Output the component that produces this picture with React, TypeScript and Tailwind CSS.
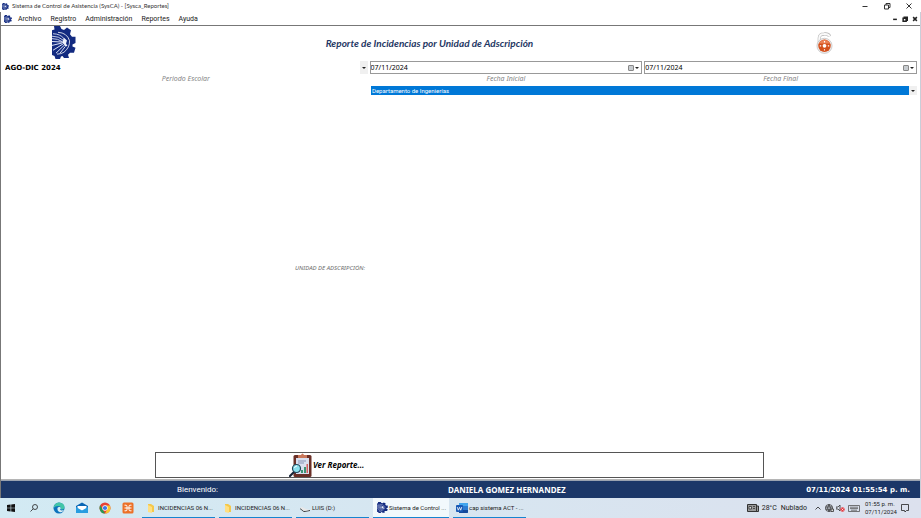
import type { ReactNode } from 'react';

function GearLogo({ className }: { className?: string }) {
  return (
    <svg viewBox="0 0 24 34" preserveAspectRatio="none" className={className} aria-hidden="true">
      <path d="M2 0H8L9.500 3L12 4L15 1.500L19 4.500L18 8.500L20 11H23.500V17.500L20.500 19L20.500 21L23.500 22.500L22 27.500L18 27.500L16 29.500L17 33H12L10.500 31L9 31.500L8 34H3.500L2.500 31L0 30V4.500L2.500 3.500Z" fill="#122a80" />
      <path d="M6 6.500Q15 7 17.500 15Q18 22 12 27Q9 29 5 29" fill="none" stroke="#fff" strokeWidth=".8" />
      <path d="M1 8Q8 8 12 13M0 10.500Q7 10.500 11 14.500M0 13Q6 13 10 16" fill="none" stroke="#c5cdea" strokeWidth="1" />
      <path d="M12 12L15 15L14 18L15.500 20.500L13 21L12 19L10 17Z" fill="#eef1fb" />
      <path d="M0 16L10 16.500M0 20L10 17.500M1 25L11 18.500M4 28L12 20M8 28L13 21.500" fill="none" stroke="#dfe5f5" strokeWidth="1" />
    </svg>
  );
}

function LockIcon() {
  return (
    <svg viewBox="0 0 18 23" className="h-[22px] w-[17px]" aria-hidden="true">
      <path d="M3.500 11V6.500Q3.500 2 8.500 2Q13 1.500 14.500 4.500" fill="none" stroke="#b4b4b4" strokeWidth="3.400" />
      <path d="M3.500 11V6.500Q3.500 2 8.500 2Q13 1.500 14.500 4.500" fill="none" stroke="#fafafa" strokeWidth="2.200" />
      <circle cx="9" cy="14.500" r="8" fill="#f1eeee" stroke="#bbb" strokeWidth=".7" />
      <circle cx="9" cy="14.500" r="6.600" fill="#d4501c" />
      <path d="M3 12Q9 4 15 12Z" fill="#eb8156" />
      <circle cx="9" cy="14.500" r="2" fill="#fff" />
      <path d="M9 9.500V11M9 18V19.500M4 14.500H5.500M12.500 14.500H14" stroke="#fff" strokeWidth="1.200" />
    </svg>
  );
}

function ReportIcon() {
  return (
    <svg viewBox="0 0 24 24" className="h-6 w-6" aria-hidden="true">
      <rect x="4.500" y="2" width="18" height="22" rx="1.500" fill="#6b3028" />
      <path d="M7 5H20V21H7Z" fill="#d9e0f0" />
      <path d="M9 5V2H12Q13.500 -1 15 2H18V5Z" fill="#c9775a" />
      <path d="M9 8H17M9 10H15" stroke="#8793b5" strokeWidth="1" />
      <path d="M12 20V17H14V20ZM15 20V14H17V20Z" fill="#3c9674" />
      <path d="M17.500 20V11H19V20Z" fill="#d25e5e" />
      <path d="M5 19L1 23" stroke="#182437" strokeWidth="2.200" strokeLinecap="round" />
      <circle cx="7.500" cy="15.500" r="4" fill="#8be0ee" stroke="#234458" strokeWidth="1.200" />
      <path d="M5.500 15Q6 13 8 13" stroke="#fff" fill="none" />
    </svg>
  );
}

function Caret() {
  return (
    <svg viewBox="0 0 4 2" className="h-[2px] w-1" aria-hidden="true">
      <path d="M0 0H4L2 2Z" fill="#222" />
    </svg>
  );
}

function MinimizeIcon({ className }: { className: string }) {
  return (
    <svg viewBox="0 0 8 8" className={className} fill="none" stroke="currentColor" aria-hidden="true">
      <path d="M1.500 4.500H6.500" />
    </svg>
  );
}

function RestoreIcon({ className }: { className: string }) {
  return (
    <svg viewBox="0 0 8 8" className={className} fill="none" stroke="currentColor" aria-hidden="true">
      <path d="M1.500 3H5.500V7H1.500ZM3 3V1.500H7V5.500H5.500" />
    </svg>
  );
}

function CloseIcon({ className }: { className: string }) {
  return (
    <svg viewBox="0 0 8 8" className={className} fill="none" stroke="currentColor" aria-hidden="true">
      <path d="M1.500 1.500L6.500 6.500M6.500 1.500L1.500 6.500" />
    </svg>
  );
}

function TitleBar() {
  return (
    <header className="flex h-3 items-center pr-2 pl-[2px] text-[#333]">
      <GearLogo className="h-[7px] w-[7px]" />
      <h1 className="ml-[3px] flex-1 font-['Lato',sans-serif] text-[6px] leading-3">Sistema de Control de Asistencia (SysCA) - [Sysca_Reportes]</h1>
      <div className="flex gap-[14px]">
        <button aria-label="Minimizar"><MinimizeIcon className="h-2 w-2" /></button>
        <button aria-label="Restaurar"><RestoreIcon className="h-2 w-2" /></button>
        <button aria-label="Cerrar"><CloseIcon className="h-2 w-2" /></button>
      </div>
    </header>
  );
}

function MenuBar() {
  return (
    <nav className="flex h-[14px] items-center border-b border-[#777] pr-[2px] pl-[3px]">
      <GearLogo className="h-2 w-2" />
      <div className="ml-[6px] flex flex-1 gap-[9px] font-['Roboto',sans-serif] text-[7px] leading-3">
        {['Archivo', 'Registro', 'Administración', 'Reportes', 'Ayuda'].map((name) => (
          <button key={name}>{name}</button>
        ))}
      </div>
      <div className="flex gap-1">
        <button aria-label="Minimizar reporte"><MinimizeIcon className="h-[6px] w-[6px] stroke-2" /></button>
        <button aria-label="Restaurar reporte"><RestoreIcon className="h-[6px] w-[6px] stroke-2" /></button>
        <button aria-label="Cerrar reporte"><CloseIcon className="h-[6px] w-[6px] stroke-2" /></button>
      </div>
    </nav>
  );
}

function FieldLabel({ id, children }: { id: string; children: ReactNode }) {
  return (
    <label htmlFor={id} className="block pb-[2px] text-center text-[7px] leading-[9px] italic text-[#858585]">
      {children}
    </label>
  );
}

function DateField({ id, label }: { id: string; label: string }) {
  return (
    <div>
      <div className="flex h-[13px] items-center border border-[#999] pr-[2px]">
        <input id={id} defaultValue="07/11/2024" className="min-w-0 flex-1 text-[7px] leading-[11px] text-black outline-none" />
        <button aria-label={'Abrir calendario: ' + label} className="flex items-center gap-[1px]">
          <svg viewBox="0 0 6 6" className="h-[6px] w-[6px]" aria-hidden="true">
            <rect x=".5" y=".5" width="5" height="5" rx=".5" fill="#c8ccd0" stroke="#888" />
          </svg>
          <Caret />
        </button>
      </div>
      <FieldLabel id={id}>{label}</FieldLabel>
    </div>
  );
}

function ArrowBox() {
  return (
    <span className="pointer-events-none absolute inset-y-0 right-0 flex w-2 items-center justify-center bg-[#f0f0f0]">
      <Caret />
    </span>
  );
}

function ReportForm() {
  return (
    <main className="flex flex-1 flex-col border-b border-[#b5b5b5] pr-[3px] pl-[3px]">
      <div className="grid h-[35px] grid-cols-[120px_1fr_186px] items-center pb-[2px]">
        <GearLogo className="h-[33px] w-6 justify-self-center" />
        <h2 className="pr-1 pl-2 text-center font-['Lato',sans-serif] text-[10px] leading-3 font-bold italic text-[#1f3864]">
          Reporte de Incidencias por Unidad de Adscripción
        </h2>
        <div className="justify-self-center"><LockIcon /></div>
      </div>

      <div className="grid grid-cols-[4fr_3fr_3fr] gap-x-[2px]">
        <div>
          <div className="relative h-[13px]">
            <select id="periodo" className="block h-full w-full appearance-none bg-white pl-px font-['DejaVu_Sans',sans-serif] text-[7px] leading-[14px] font-bold text-black outline-none">
              <option>AGO-DIC 2024</option>
            </select>
            <ArrowBox />
          </div>
          <FieldLabel id="periodo">Periodo Escolar</FieldLabel>
        </div>
        <DateField id="inicial" label="Fecha Inicial" />
        <DateField id="final" label="Fecha Final" />
      </div>

      <div className="grid flex-1 grid-cols-[4fr_6fr] gap-x-[3px] pt-px">
        <label htmlFor="unidad" className="self-center pr-[3px] pb-[2px] text-right text-[6px] leading-3 italic text-[#6a6a6a]">UNIDAD DE ADSCRIPCIÓN:</label>
        <div className="relative h-[9px]">
          <select id="unidad" className="block h-full w-full appearance-none bg-[#0078d7] pl-px font-['Roboto',sans-serif] text-[6px] leading-[9px] text-white outline-none">
            <option>Departamento de Ingenierías</option>
          </select>
          <ArrowBox />
        </div>
      </div>

      <button className="mr-[153px] mb-px ml-[151px] flex h-[26px] items-center border border-[#555] pl-[133px] text-[8px] leading-3 font-bold italic text-black">
        <ReportIcon />
        <span>Ver Reporte...</span>
      </button>
    </main>
  );
}

function StatusBar() {
  return (
    <div className="grid h-[18px] grid-cols-[393px_1fr_1fr] items-center border-t border-[#9aa3b0] bg-[#1b3768] pr-[10px] text-[8px] leading-3 text-white">
      <span className="text-center font-['Roboto',sans-serif]">Bienvenido:</span>
      <strong className="pl-[54px]">DANIELA GOMEZ HERNANDEZ</strong>
      <time className="text-right font-['DejaVu_Sans',sans-serif] text-[7px] font-bold">07/11/2024 01:55:54 p. m.</time>
    </div>
  );
}

function WindowsIcon() {
  return (
    <svg viewBox="0 0 8 8" className="h-2 w-2" aria-hidden="true">
      <path d="M0 1L3.600 .5V3.700H0ZM4.200 .4L8 0V3.700H4.200ZM0 4.300H3.600V7.500L0 7ZM4.200 4.300H8V8L4.200 7.600Z" fill="#111" />
    </svg>
  );
}

function SearchIcon() {
  return (
    <svg viewBox="0 0 8 8" className="h-2 w-2" fill="none" stroke="#222" strokeWidth=".8" aria-hidden="true">
      <circle cx="5" cy="3" r="2.500" />
      <path d="M3.200 4.800L.5 7.500" />
    </svg>
  );
}

function EdgeIcon() {
  return (
    <svg viewBox="0 0 12 12" className="h-3 w-3" aria-hidden="true">
      <circle cx="6" cy="6" r="5.500" fill="#0c73bd" />
      <path d="M.6 6Q1 1 6 .5Q11.500 1 11.500 5.500Q11 8 8 7.500Q8.500 4 5 4Q2 4 .6 6Z" fill="#43c6a8" />
      <path d="M4.500 6Q5 4.500 7 5Q8.500 6 7 7.500Q8 9 11 8Q9 11 6.500 10Q4 9 4.500 6Z" fill="#d9edf4" />
    </svg>
  );
}

function MailIcon() {
  return (
    <svg viewBox="0 0 12 12" className="h-3 w-3" aria-hidden="true">
      <path d="M0 4L6 .5L12 4V11H0Z" fill="#0866b4" />
      <path d="M1.500 4H10.500V7L6 9L1.500 7Z" fill="#fff" />
      <path d="M0 5L6 8.500L12 5V11H0Z" fill="#279de0" />
    </svg>
  );
}

function ChromeIcon() {
  return (
    <svg viewBox="0 0 12 12" className="h-3 w-3" aria-hidden="true">
      <circle cx="6" cy="6" r="5.500" fill="#e84235" />
      <path d="M1.200 3.300L4 8L6 11.500Q1 11.500 .5 6Q.5 4.500 1.200 3.300Z" fill="#279b51" />
      <path d="M6 3.500H10.900Q12.500 8 9.500 10.400Q8 11.500 6 11.500L8.300 7.200Z" fill="#f8c52e" />
      <circle cx="6" cy="6" r="2.700" fill="#fff" />
      <circle cx="6" cy="6" r="2.100" fill="#3b77e8" />
    </svg>
  );
}

function XamppIcon() {
  return (
    <svg viewBox="0 0 12 12" className="h-3 w-3" aria-hidden="true">
      <rect x=".5" y=".5" width="11" height="11" rx="1.500" fill="#ec7028" />
      <path d="M2.500 3.200H4Q5 3.200 5 4.500V7.500Q5 8.800 4 8.800H2.500M9.500 3.200H8Q7 3.200 7 4.500V7.500Q7 8.800 8 8.800H9.500M2.500 6H9.500" fill="none" stroke="#fff" strokeWidth="1" />
    </svg>
  );
}

function FolderIcon() {
  return (
    <svg viewBox="0 0 8 10" className="h-[10px] w-2" aria-hidden="true">
      <path d="M1 1H4L7 3V9H1Z" fill="#f4c84a" />
      <path d="M1 2L5 4V10L1 9Z" fill="#ffdf81" />
    </svg>
  );
}

function DriveIcon() {
  return (
    <svg viewBox="0 0 10 8" className="h-2 w-[10px]" aria-hidden="true">
      <path d="M0 4L4 7L10 6V7L4 8L0 5Z" fill="#333" />
      <path d="M0 4L2 3L6 5L10 6L4 7Z" fill="#e8e8e8" />
    </svg>
  );
}

function WordIcon() {
  return (
    <svg viewBox="0 0 12 12" className="h-3 w-3" aria-hidden="true">
      <rect x="3" y="1" width="9" height="10" rx="1" fill="#2b7cd3" />
      <path d="M3 2Q3 1 4 1H11Q12 1 12 2V4H3Z" fill="#41a5ee" />
      <path d="M3 8H12V10Q12 11 11 11H3Z" fill="#164a9b" />
      <rect x="0" y="3" width="7" height="7" rx="1" fill="#1858b4" />
      <path d="M1.200 5L2.300 8.200L3.500 5.300L4.700 8.200L5.800 5" fill="none" stroke="#fff" strokeWidth=".8" />
    </svg>
  );
}

function Task({ icon, text, active = false }: { icon: ReactNode; text: string; active?: boolean }) {
  return (
    <button className={`flex h-5 items-center gap-px border-b border-[#1684cf] pl-[3px] font-['Roboto',sans-serif] text-[6px] leading-3 whitespace-nowrap ${active ? 'w-[76px] bg-[#f2f9fc]' : 'w-[73px]'}`}>
      <span className="flex w-3 shrink-0 justify-center">{icon}</span>
      <span>{text}</span>
    </button>
  );
}

function Tray() {
  return (
    <div className="ml-auto flex items-center font-['Roboto',sans-serif] text-[7px] leading-[9px] text-[#222]">
      <svg viewBox="0 0 12 8" className="h-2 w-3" aria-hidden="true">
        <path d="M.5 .5H9.500V7.500H.5ZM9.500 2H11.500V7.500H9" fill="#999" stroke="#333" />
        <path d="M2 2.500H4.500V5H2ZM6 2.500H8M6 4.500H8" fill="#ddd" stroke="#333" strokeWidth=".8" />
      </svg>
      <span className="ml-[3px]">28°C</span>
      <span className="ml-1">Nublado</span>
      <svg viewBox="0 0 6 4" className="ml-2 h-1 w-[6px]" fill="none" stroke="#222" strokeWidth=".8" aria-hidden="true">
        <path d="M.5 3.500L3 1L5.500 3.500" />
      </svg>
      <svg viewBox="0 0 9 8" className="ml-1 h-2 w-[9px]" fill="none" stroke="#333" strokeWidth=".8" aria-hidden="true">
        <circle cx="4" cy="4" r="3.500" />
        <path d="M4 .5Q1 4 4 7.500Q7 4 4 .5M.5 3H7.500M.5 5.200H7.500" />
        <path d="M6 5H8.500V7.500H6Z" fill="#ddd" />
      </svg>
      <svg viewBox="0 0 9 8" className="ml-[2px] h-2 w-[9px]" aria-hidden="true">
        <path d="M0 3H2L4 1V7L2 5H0Z" fill="none" stroke="#333" strokeWidth=".8" />
        <circle cx="6.500" cy="5.500" r="2.200" fill="#e43d45" />
        <path d="M5.500 4.500L7.500 6.500M7.500 4.500L5.500 6.500" stroke="#fff" strokeWidth=".6" />
      </svg>
      <svg viewBox="0 0 12 7" className="ml-[3px] h-[7px] w-3" fill="none" stroke="#555" strokeWidth=".8" aria-hidden="true">
        <path d="M.5 .5H11.500V6.500H.5ZM2 2.200H10M2 3.600H10M3 5.200H9" />
      </svg>
      <time className="ml-[5px] w-[28px] text-center text-[6px] leading-[8px] whitespace-nowrap">
        01:55 p. m.<br />07/11/2024
      </time>
      <button aria-label="Notificaciones" className="ml-2">
        <svg viewBox="0 0 8 9" className="block h-[9px] w-2" fill="none" stroke="#222" strokeWidth=".8" aria-hidden="true">
          <path d="M.5 .5H7.500V6.500H5.500L4 8L3.500 6.500H.5Z" />
        </svg>
      </button>
    </div>
  );
}

function Taskbar() {
  return (
    <footer className="flex h-5 items-center bg-linear-to-r from-[#d2eaf3] to-[#dce1ee] pr-3 pl-[7px]">
      <div className="flex items-center gap-[15px]">
        <button aria-label="Inicio"><WindowsIcon /></button>
        <button aria-label="Buscar"><SearchIcon /></button>
        <div className="flex gap-[11px]">
          <button aria-label="Edge"><EdgeIcon /></button>
          <button aria-label="Correo"><MailIcon /></button>
          <button aria-label="Chrome"><ChromeIcon /></button>
          <button aria-label="XAMPP"><XamppIcon /></button>
        </div>
      </div>
      <div className="ml-2 flex gap-1">
        <Task icon={<FolderIcon />} text="INCIDENCIAS 06 N..." />
        <Task icon={<FolderIcon />} text="INCIDENCIAS 06 N..." />
        <Task icon={<DriveIcon />} text="LUIS (D:)" />
        <Task icon={<GearLogo className="h-[11px] w-[11px]" />} text="Sistema de Control ..." active />
        <Task icon={<WordIcon />} text="cap sistema ACT - ..." />
      </div>
      <Tray />
    </footer>
  );
}

export default function App() {
  return (
    <div className="flex min-h-screen flex-col bg-white font-['Noto_Sans','Open_Sans',sans-serif] text-[#222]">
      <TitleBar />
      <div className="flex flex-1 flex-col border-r border-l border-r-[#c9ced8] border-l-[#777]">
        <MenuBar />
        <ReportForm />
        <StatusBar />
      </div>
      <Taskbar />
    </div>
  );
}
